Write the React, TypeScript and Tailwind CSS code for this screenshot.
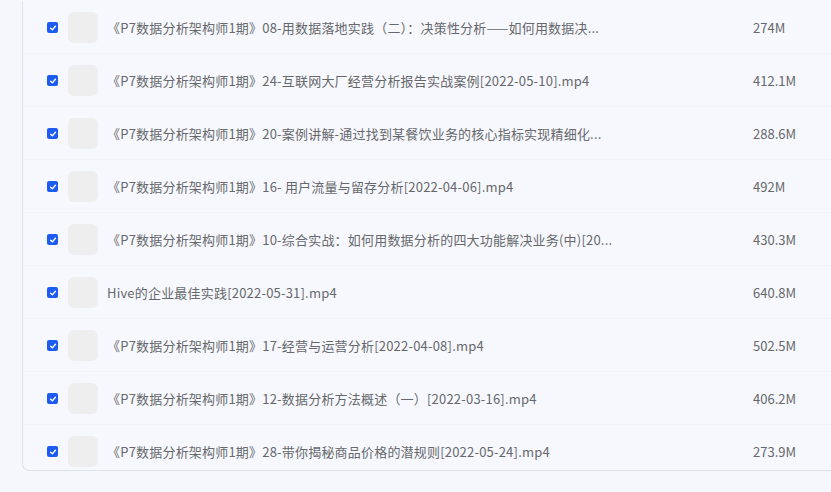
import React from 'react'

// names shown as the list shows them, long ones already cut with "..."
const FILES: { name: string; size: string }[] = [
  { name: '《P7数据分析架构师1期》08-用数据落地实践（二）：决策性分析——如何用数据决...', size: '274M' },
  { name: '《P7数据分析架构师1期》24-互联网大厂经营分析报告实战案例[2022-05-10].mp4', size: '412.1M' },
  { name: '《P7数据分析架构师1期》20-案例讲解-通过找到某餐饮业务的核心指标实现精细化...', size: '288.6M' },
  { name: '《P7数据分析架构师1期》16- 用户流量与留存分析[2022-04-06].mp4', size: '492M' },
  { name: '《P7数据分析架构师1期》10-综合实战：如何用数据分析的四大功能解决业务(中)[20...', size: '430.3M' },
  { name: 'Hive的企业最佳实践[2022-05-31].mp4', size: '640.8M' },
  { name: '《P7数据分析架构师1期》17-经营与运营分析[2022-04-08].mp4', size: '502.5M' },
  { name: '《P7数据分析架构师1期》12-数据分析方法概述（一）[2022-03-16].mp4', size: '406.2M' },
  { name: '《P7数据分析架构师1期》28-带你揭秘商品价格的潜规则[2022-05-24].mp4', size: '273.9M' },
]

function Check() {
  return (
    <span className="flex h-[11px] w-[11px] shrink-0 items-center justify-center rounded-[2px] bg-[#1c5cf1]">
      <svg viewBox="0 0 10 10" className="h-[8px] w-[8px]">
        <path d="M2 5.2 L4.2 7.3 L8 2.8" fill="none" stroke="white" strokeWidth="1.8" strokeLinecap="round" strokeLinejoin="round" />
      </svg>
    </span>
  )
}

export default function App() {
  return (
    <div className="h-[492px] w-[831px] overflow-hidden bg-[#f5f7fd] font-['Noto_Sans_CJK_SC','Noto_Sans',sans-serif] text-[13px] text-[#66686c]">
      <div className="ml-[22px] mt-px overflow-hidden rounded-bl-[7px] border-b border-l border-[#dfe2e8] bg-[#f7f8fd]">
        {FILES.map((f, i) => (
          <div
            key={i}
            className={`flex items-start pt-[11px] ${
              i === FILES.length - 1 ? 'h-[45px]' : 'h-[53px] border-b border-[#f3f4f9]'
            }`}
          >
            <div className="flex h-[31px] items-center pl-[24px]">
              <Check />
            </div>
            <div className="ml-[10px] h-[31px] w-[30px] shrink-0 rounded-[6px] bg-[#eeeeef]" />
            <div className="ml-[9px] flex h-[31px] w-[646px] shrink-0 items-center whitespace-nowrap tracking-[0.2px]">
              {f.name}
            </div>
            <div className="flex h-[31px] items-center">{f.size}</div>
          </div>
        ))}
      </div>
    </div>
  )
}
